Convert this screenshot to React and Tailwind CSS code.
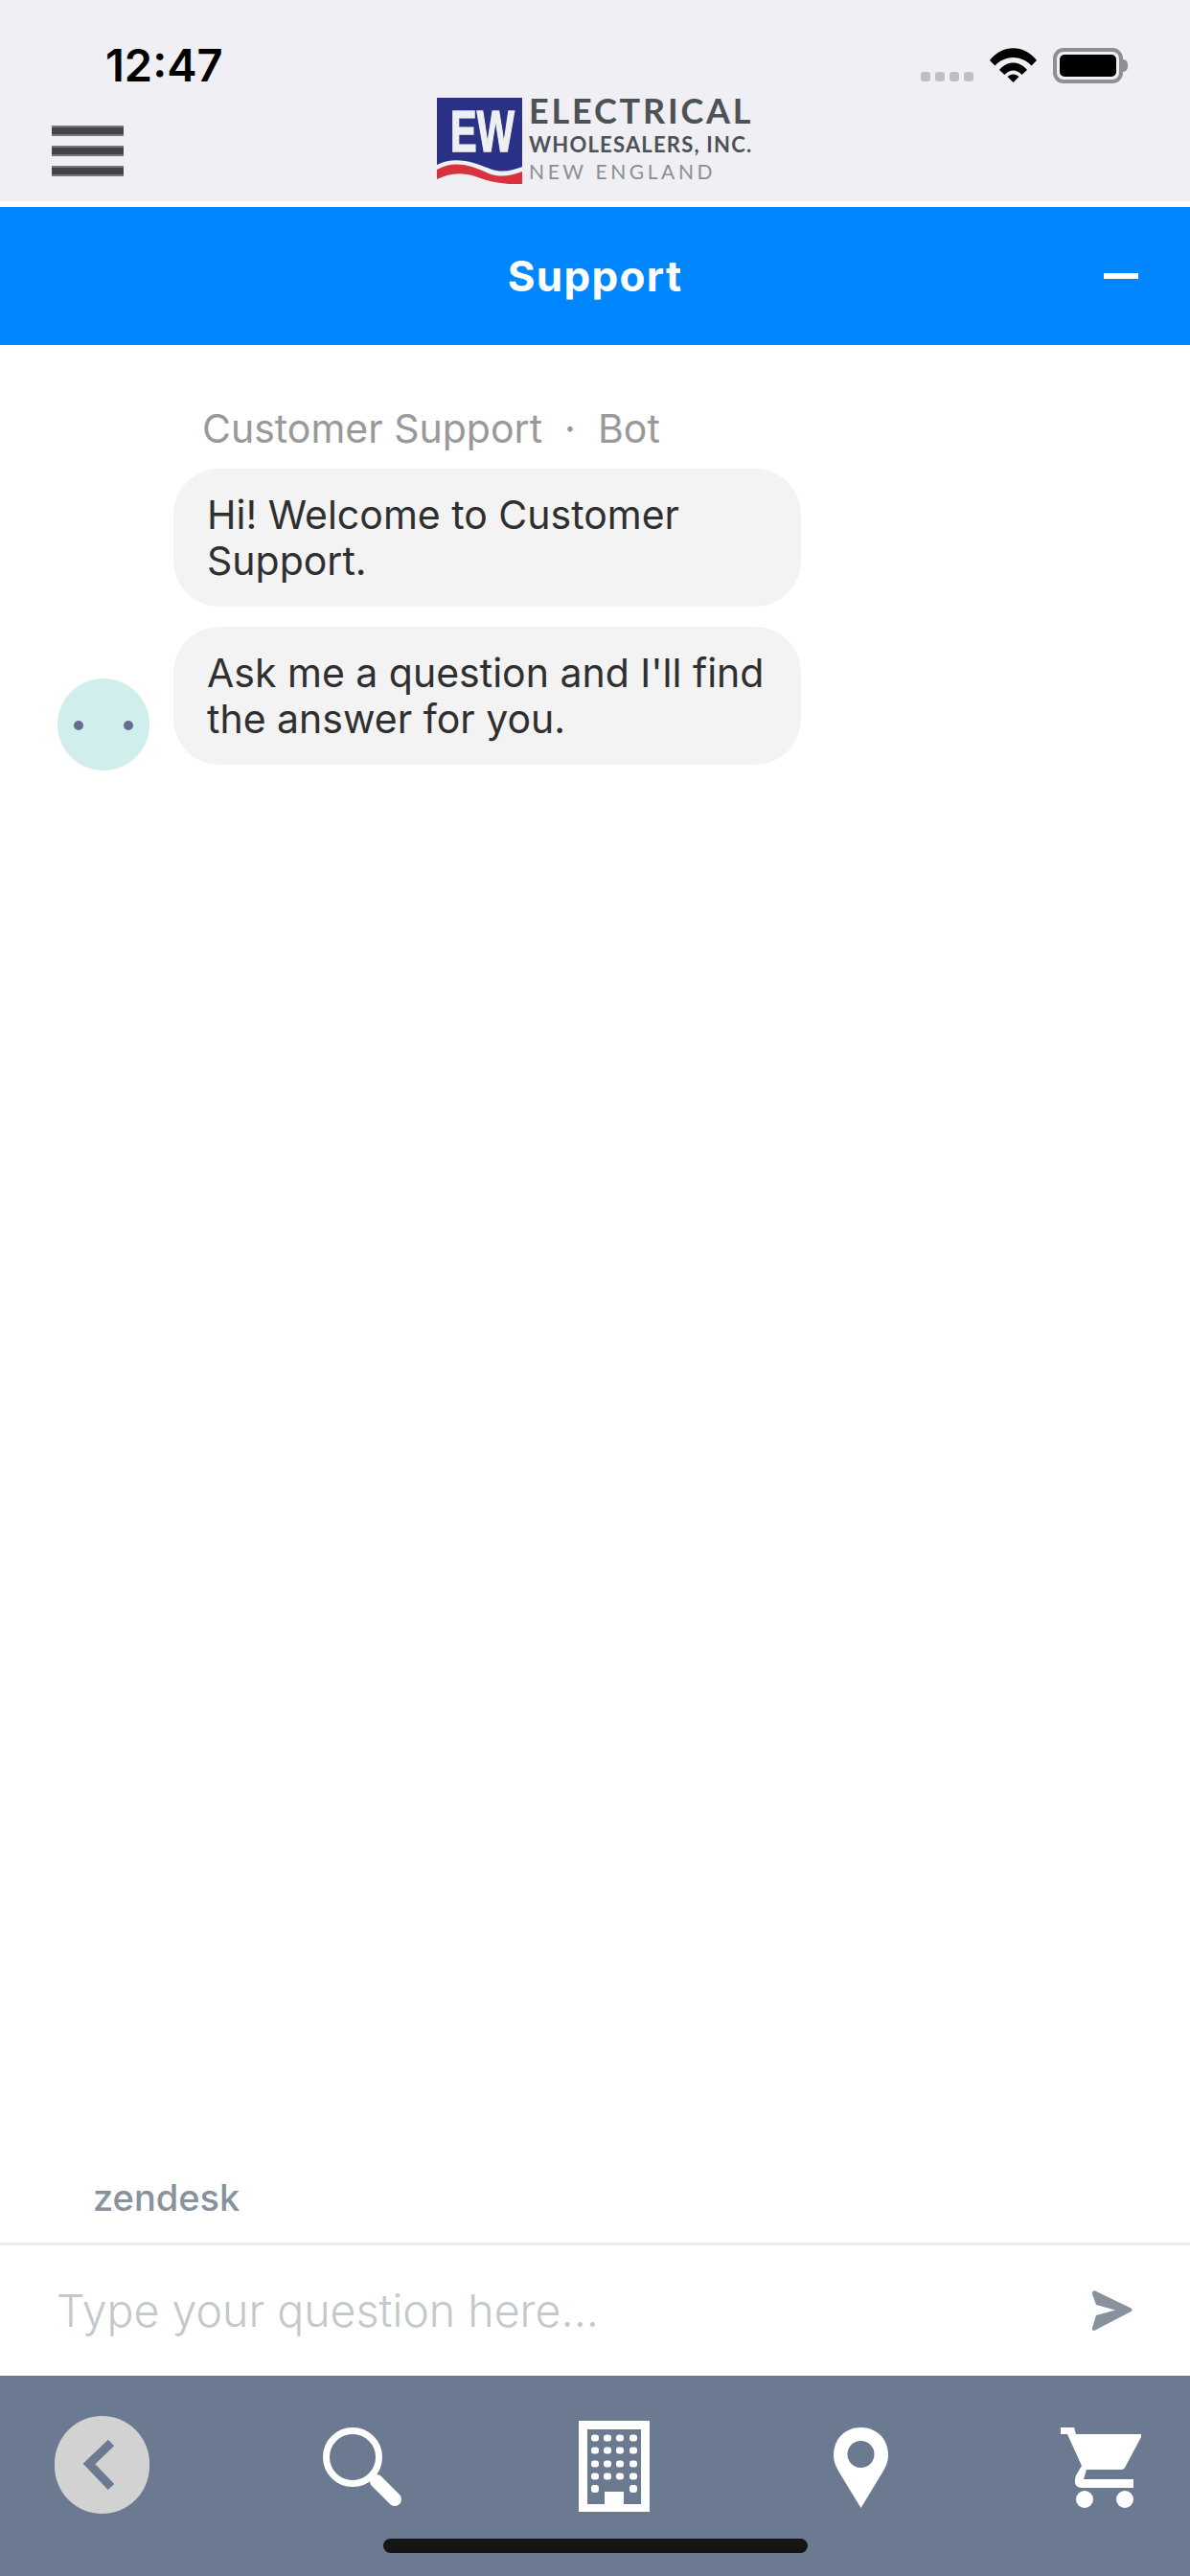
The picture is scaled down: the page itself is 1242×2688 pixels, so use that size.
import React from 'react';

const NAV_BG = '#6b7a90';

const WifiIcon = () => (
  <svg width="49" height="36" viewBox="0 0 49 36" className="ml-[17px] shrink-0">
    <path d="M0 13 C13 -4 36 -4 49 13 L43.5 18.5 C33 7 16 7 5.500 18.500 Z" fill="#000" />
    <path d="M10 23 C18 13 31 13 39 23 L33.500 28 C28 22 21 22 15.500 28 Z" fill="#000" />
    <path d="M18.500 30 C22 26.500 27 26.500 30.500 30 L24.500 36 Z" fill="#000" />
  </svg>
);

const BatteryIcon = () => (
  <div className="ml-[17px] flex items-center">
    <div className="flex h-[37px] w-[73px] rounded-[11px] border-[4px] border-[#8e8e93] p-[3px]">
      <div className="h-full w-full rounded-[5px] bg-black" />
    </div>
    <div className="h-[13px] w-[5px] rounded-r-full bg-[#8e8e93]" />
  </div>
);

const StatusBar = () => (
  <div className="mt-[45px] flex h-[46px] items-center pl-[110px] pr-[65px]">
    <span className="flex-1 font-['Inter',sans-serif] text-[47px] font-semibold leading-[46px] text-black">12:47</span>
    <div className="mt-[8px] flex gap-[5px] self-end pb-[6px]">
      {[0, 1, 2, 3].map((i) => (
        <div key={i} className="h-[10px] w-[10px] rounded-[3px] bg-[#bfbfc4]" />
      ))}
    </div>
    <WifiIcon />
    <BatteryIcon />
  </div>
);

const LogoMark = () => (
  <svg width="89" height="90" viewBox="0 0 89 90" className="shrink-0">
    <rect width="89" height="90" fill="#2a3186" />
    <text transform="translate(14 56) scale(0.68 1)" fontFamily="'Liberation Sans', sans-serif" fontWeight="700" fontSize="61" fill="#eef0f0" stroke="#eef0f0" strokeWidth="1.500">EW</text>
    <path d="M0 70 C20 60 40 68 55 74 C68 79 78 76 89 72 L89 90 L0 90 Z" fill="#eef0f4" />
    <path d="M0 75 C20 64 38 72 54 79 C67 84 78 81 89 77 L89 90 C70 91 55 88 40 82 C25 77 12 79 0 85 Z" fill="#d8323f" />
  </svg>
);

const Logo = () => (
  <div className="flex h-[90px] w-[330px]">
    <LogoMark />
    <div className="ml-[7px] flex flex-col font-['Lato',sans-serif]">
      <span className="h-[39px] text-[36px] font-bold leading-[26px] tracking-[2.8px] text-[#4d5355]">ELECTRICAL</span>
      <span className="h-[30px] whitespace-nowrap text-[22px] font-bold leading-[20px] tracking-[1.2px] text-[#4d5355]">WHOLESALERS, INC.</span>
      <span className="whitespace-nowrap text-[21px] leading-[16px] tracking-[3.6px] text-[#8b8f91]">NEW ENGLAND</span>
    </div>
  </div>
);

const HamburgerBar = () => (
  <div className="h-[11px] w-[75px] border-y-[2px] border-[#77777b] bg-[#444447]" />
);

const Header = () => (
  <div className="h-[210px] bg-[#efeff4]">
    <StatusBar />
    <div className="mt-[11px] grid grid-cols-[1fr_auto_1fr]">
      <div className="flex flex-col gap-[10px] pl-[54px] pt-[29px]">
        <HamburgerBar />
        <HamburgerBar />
        <HamburgerBar />
      </div>
      <Logo />
      <div />
    </div>
  </div>
);

const SupportBar = () => (
  <div className="relative mt-[6px] flex h-[144px] items-center justify-center bg-[#0087ff]">
    <span className="font-['Inter',sans-serif] text-[44px] font-bold leading-none tracking-[1.3px] text-white">Support</span>
    <div className="absolute right-[54px] top-[69px] h-[6px] w-[36px] bg-white" />
  </div>
);

const Bubble = ({ children }) => (
  <div className="w-[655px] whitespace-nowrap rounded-[48px] bg-[#f3f3f3] py-[24px] pl-[35px] pr-[36px] text-[41px] leading-[48px] text-[#2f2f2f]">
    {children}
  </div>
);

const Conversation = () => (
  <div className="flex-1 font-['Inter',sans-serif]">
    <div className="pl-[211px] pt-[63px] text-[41px] leading-[48px] text-[#999999]">
      Customer Support&nbsp; ·&nbsp; Bot
    </div>
    <div className="ml-[181px] mt-[18px]">
      <Bubble>Hi! Welcome to Customer<br />Support.</Bubble>
    </div>
    <div className="mt-[21px] flex items-end pl-[60px]">
      <div className="mb-[-6px] mr-[25px] flex h-[96px] w-[96px] items-center justify-center gap-[42px] rounded-full bg-[#cfeeec] pt-[1px]">
        <div className="h-[10px] w-[10px] rounded-full bg-[#666b8f]" />
        <div className="h-[10px] w-[10px] rounded-full bg-[#666b8f]" />
      </div>
      <Bubble>Ask me a question and I'll find<br />the answer for you.</Bubble>
    </div>
  </div>
);

const Composer = () => (
  <>
    <div className="pb-[24px] pl-[97px] font-['Inter',sans-serif] text-[38px] font-medium leading-[46px] text-[#87929d]">zendesk</div>
    <div className="flex h-[139px] items-center border-t-[3px] border-[#e9ebed] pl-[59px] pr-[60px]">
      <span className="flex-1 font-['Inter',sans-serif] text-[46.5px] font-light leading-[54px] text-[#c2c8cc]">Type your question here...</span>
      <svg width="43" height="43" viewBox="0 0 43 43">
        <path d="M4 0.500 L41.500 18.500 Q43.500 20 41.500 22 L4 41.500 Q0.500 43 1 39 L5 26 L25 20.500 L5 15 L1 4 Q0.500 -0.500 4 0.500 Z" fill="#87929d" />
      </svg>
    </div>
  </>
);

const BackIcon = () => (
  <div className="flex h-[102px] w-[99px] items-center justify-center rounded-full bg-[#d2d2d2]">
    <svg width="36" height="52" viewBox="0 0 36 52" className="mr-[6px]">
      <path d="M30 3 L7 25 L30 49" fill="none" stroke={NAV_BG} strokeWidth="9" />
    </svg>
  </div>
);

const SearchIcon = () => (
  <svg width="84" height="84" viewBox="0 0 84 84" className="ml-[181px] mt-[12px]">
    <circle cx="31" cy="31" r="27.500" fill="none" stroke="#fff" strokeWidth="7" />
    <path d="M56 56 L75 75" stroke="#fff" strokeWidth="14" strokeLinecap="round" />
  </svg>
);

const BuildingIcon = () => (
  <svg width="74" height="95" viewBox="0 0 74 95" className="ml-[183px] mt-[5px]">
    <path fillRule="evenodd" d="M0 0 H74 V95 H0 Z M9 9 V87 H65 V9 Z" fill="#fff" />
    {[18, 31, 45, 58].map((y) =>
      [17, 30, 43, 57].map((x) => <rect key={`${y}-${x}`} x={x - 4} y={y - 3.500} width="8" height="7" rx="3" fill="#fff" />)
    )}
    <rect x="13" y="67" width="8" height="8" rx="3" fill="#fff" />
    <rect x="53" y="67" width="8" height="8" rx="3" fill="#fff" />
    <rect x="27" y="74" width="20" height="14" fill="#fff" />
  </svg>
);

const PinIcon = () => (
  <svg width="57" height="84" viewBox="0 0 57 84" className="ml-[192px] mt-[12px]">
    <path d="M28.500 0 C45 0 57 12 57 29 C57 36 54 42 51 47 L28.500 84 L6 47 C3 42 0 36 0 29 C0 12 12 0 28.500 0 Z" fill="#fff" />
    <circle cx="28.500" cy="28" r="14" fill={NAV_BG} />
  </svg>
);

const CartIcon = () => (
  <svg width="84" height="84" viewBox="0 0 84 84" className="ml-[180px] mt-[12px]">
    <path d="M0 0 H14 L16 7 H84 V10 L67 42 Q66 44 62 44 H27 L24 54 H76 V63 H22 Q12 63 16 50 L22 40 L7 7 H0 Z" fill="#fff" />
    <circle cx="25" cy="75" r="9" fill="#fff" />
    <circle cx="67" cy="75" r="9" fill="#fff" />
  </svg>
);

const BottomNav = () => (
  <div className="h-[209px] bg-[#6b7a90] pt-[42px]">
    <div className="flex h-[102px] items-start pl-[57px]">
      <BackIcon />
      <SearchIcon />
      <BuildingIcon />
      <PinIcon />
      <CartIcon />
    </div>
    <div className="mx-auto mt-[26px] h-[15px] w-[443px] rounded-full bg-[#151515]" />
  </div>
);

const App = () => {
  return (
    <div className="flex h-[2688px] w-[1242px] flex-col overflow-hidden bg-white">
      <Header />
      <SupportBar />
      <Conversation />
      <Composer />
      <BottomNav />
    </div>
  );
};

export default App;
